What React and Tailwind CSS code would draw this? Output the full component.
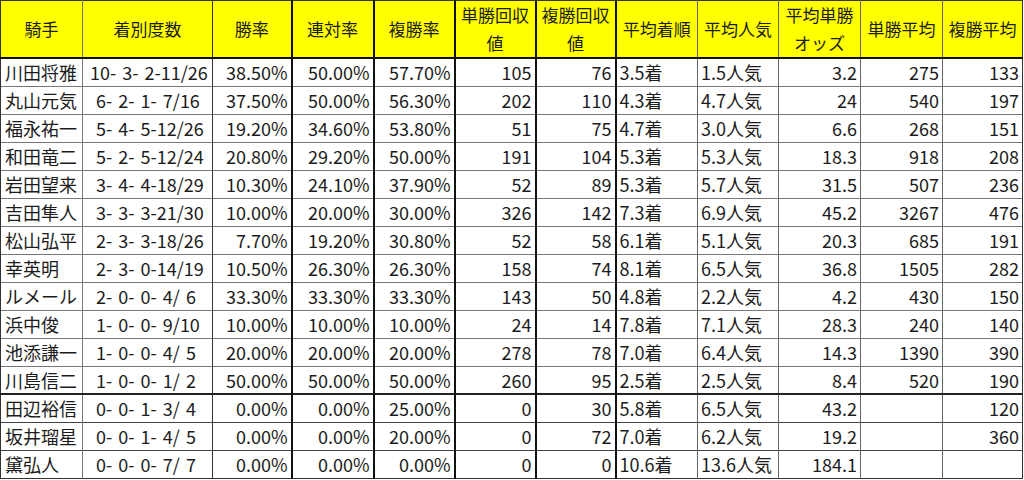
import React from "react";

const headers = [
  ["騎手"],
  ["着別度数"],
  ["勝率"],
  ["連対率"],
  ["複勝率"],
  ["単勝回収", "値"],
  ["複勝回収", "値"],
  ["平均着順"],
  ["平均人気"],
  ["平均単勝", "オッズ"],
  ["単勝平均"],
  ["複勝平均"],
];

const rows = [
  ["川田将雅", "10- 3- 2-11/26", "38.50%", "50.00%", "57.70%", "105", "76", "3.5着", "1.5人気", "3.2", "275", "133"],
  ["丸山元気", " 6- 2- 1- 7/16", "37.50%", "50.00%", "56.30%", "202", "110", "4.3着", "4.7人気", "24", "540", "197"],
  ["福永祐一", " 5- 4- 5-12/26", "19.20%", "34.60%", "53.80%", "51", "75", "4.7着", "3.0人気", "6.6", "268", "151"],
  ["和田竜二", " 5- 2- 5-12/24", "20.80%", "29.20%", "50.00%", "191", "104", "5.3着", "5.3人気", "18.3", "918", "208"],
  ["岩田望来", " 3- 4- 4-18/29", "10.30%", "24.10%", "37.90%", "52", "89", "5.3着", "5.7人気", "31.5", "507", "236"],
  ["吉田隼人", " 3- 3- 3-21/30", "10.00%", "20.00%", "30.00%", "326", "142", "7.3着", "6.9人気", "45.2", "3267", "476"],
  ["松山弘平", " 2- 3- 3-18/26", "7.70%", "19.20%", "30.80%", "52", "58", "6.1着", "5.1人気", "20.3", "685", "191"],
  ["幸英明", " 2- 3- 0-14/19", "10.50%", "26.30%", "26.30%", "158", "74", "8.1着", "6.5人気", "36.8", "1505", "282"],
  ["ルメール", " 2- 0- 0- 4/ 6", "33.30%", "33.30%", "33.30%", "143", "50", "4.8着", "2.2人気", "4.2", "430", "150"],
  ["浜中俊", " 1- 0- 0- 9/10", "10.00%", "10.00%", "10.00%", "24", "14", "7.8着", "7.1人気", "28.3", "240", "140"],
  ["池添謙一", " 1- 0- 0- 4/ 5", "20.00%", "20.00%", "20.00%", "278", "78", "7.0着", "6.4人気", "14.3", "1390", "390"],
  ["川島信二", " 1- 0- 0- 1/ 2", "50.00%", "50.00%", "50.00%", "260", "95", "2.5着", "2.5人気", "8.4", "520", "190"],
  ["田辺裕信", " 0- 0- 1- 3/ 4", "0.00%", "0.00%", "25.00%", "0", "30", "5.8着", "6.5人気", "43.2", "", "120"],
  ["坂井瑠星", " 0- 0- 1- 4/ 5", "0.00%", "0.00%", "20.00%", "0", "72", "7.0着", "6.2人気", "19.2", "", "360"],
  ["黛弘人", " 0- 0- 0- 7/ 7", "0.00%", "0.00%", "0.00%", "0", "0", "10.6着", "13.6人気", "184.1", "", ""],
];

const widths = [82, 130, 79, 82, 81, 81, 80, 82, 81, 82, 82, 80];

const align = [
  "text-left pl-[4px]",
  "text-left pl-[7px]",
  "text-right pr-[3px]",
  "text-right pr-[3px]",
  "text-right pr-[3px]",
  "text-right pr-[3px]",
  "text-right pr-[3px]",
  "text-left pl-[3px]",
  "text-left pl-[3px]",
  "text-right pr-[3px]",
  "text-right pr-[3px]",
  "text-right pr-[3px]",
];

const vborder = [
  "border-l border-l-[#333] border-r border-r-[#777]",
  "border-r border-r-[#333]",
  "border-r-2 border-r-[#111]",
  "border-r-2 border-r-[#111]",
  "border-r-2 border-r-[#111]",
  "border-r-2 border-r-[#111]",
  "border-r-2 border-r-[#111]",
  "border-r border-r-[#666]",
  "border-r border-r-[#666]",
  "border-r border-r-[#666]",
  "border-r border-r-[#666]",
  "border-r border-r-[#333]",
];

export default function App() {
  return (
    <div
      className="w-[1024px] h-[480px] bg-white overflow-hidden text-[#1c1c1c]"
      style={{ fontFamily: '"Noto Sans CJK JP", "Noto Sans", sans-serif' }}
    >
      <table className="table-fixed border-collapse w-[1023px] text-[18px]">
        <colgroup>
          {widths.map((w, i) => (
            <col key={i} style={{ width: w }} />
          ))}
        </colgroup>
        <thead>
          <tr className="h-[56px] bg-[#ffff00]">
            {headers.map((h, i) => (
              <th
                key={i}
                className={`font-normal text-[17px] text-center leading-[28px] p-0 border-t border-t-[#333] border-b-2 border-b-[#111] ${vborder[i]}`}
              >
                {h.map((line, j) => (
                  <div key={j}>{line}</div>
                ))}
              </th>
            ))}
          </tr>
        </thead>
        <tbody>
          {rows.map((r, ri) => (
            <tr
              key={ri}
              className={`h-[28px] ${
                ri === 11
                  ? "border-b-2 border-b-[#222]"
                  : ri === rows.length - 1
                  ? "border-b border-b-[#333]"
                  : ri >= 12
                  ? "border-b border-b-[#444]"
                  : "border-b border-b-[#777]"
              }`}
            >
              {r.map((c, ci) => (
                <td
                  key={ci}
                  className={`whitespace-pre leading-[26px] p-0 ${align[ci]} ${vborder[ci]} ${ci === 1 ? "[word-spacing:2px]" : ""}`}
                >
                  {c}
                </td>
              ))}
            </tr>
          ))}
        </tbody>
      </table>
    </div>
  );
}
